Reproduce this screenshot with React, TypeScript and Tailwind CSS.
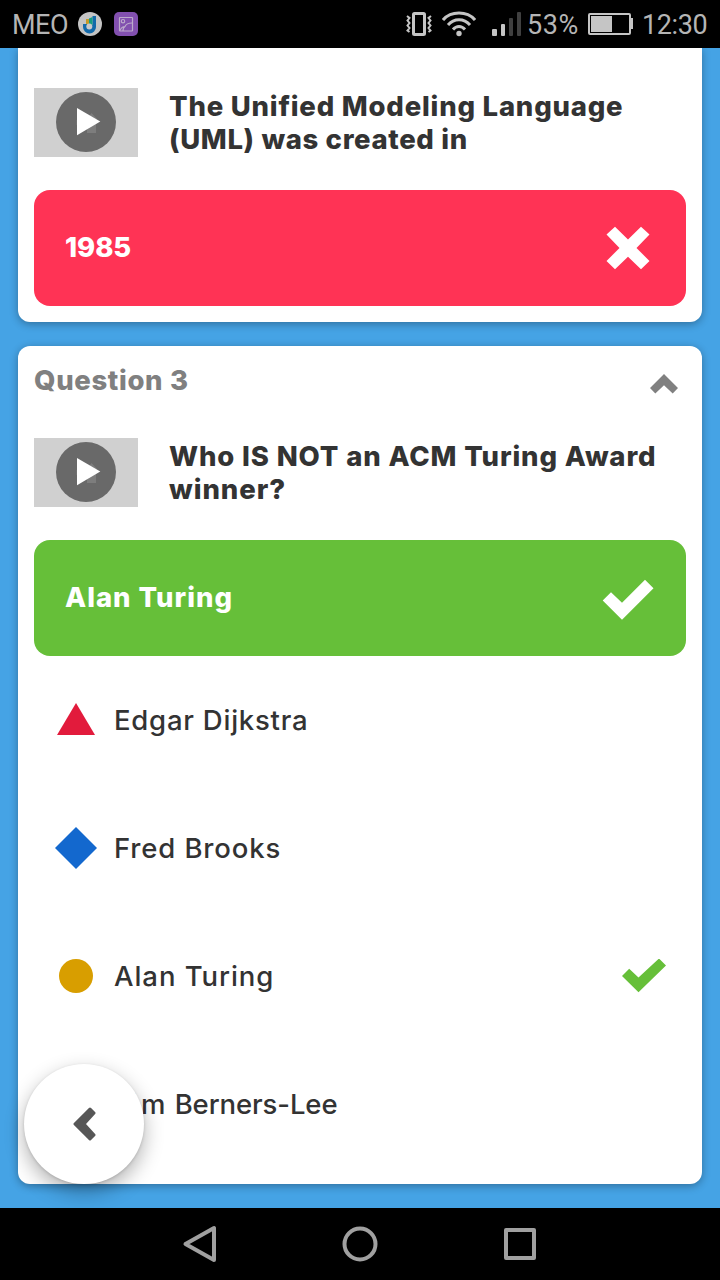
import type { ReactNode } from "react";

function StatusBar() {
  return (
    <header className="flex h-12 shrink-0 items-center bg-black pl-3 font-[Roboto,sans-serif] text-[27px] leading-none text-[#b5b5b5]">
      <span className="w-[66px] pt-[3px] tracking-[-0.5px]">MEO</span>
      <svg className="h-6 w-6" viewBox="0 0 24 24">
        <circle cx="12" cy="12" r="12" fill="#c4c4c4" />
        <path d="M14.500 4H18V15A6.400 6.400 0 0 1 5 15V12H9L14.500 13Z" fill="#126aab" />
        <path d="M8 7H11V12H8Z" fill="#c49a28" />
        <path d="M11 6.500L14.500 5V13H11Z" fill="#169c82" />
        <circle cx="11.300" cy="14.500" r="3" fill="#c9c9c9" />
      </svg>
      <svg className="ml-3 h-6 w-6" viewBox="0 0 24 24" fill="none">
        <rect width="24" height="24" rx="5" fill="#8250af" />
        <g stroke="#bcaacb" strokeWidth="1.200">
          <rect x="5.500" y="5.500" width="13" height="13.500" rx=".5" />
          <circle cx="9" cy="9.200" r="1.700" />
          <path d="M6 18.500C7 16 8.500 14.500 11 14.500C12 12 14.500 11 18 11M9 19C9 17 10 15 11 14.500" />
        </g>
      </svg>
      <svg className="ml-auto h-6 w-[26px]" viewBox="0 0 26 24" fill="none" stroke="#c5c5c5">
        <rect x="7.500" y="1.500" width="11" height="21" rx="1" strokeWidth="3" />
        <path d="M1 4L3.500 6L1.500 8.500L3.500 11L1.500 13.500L3.500 16L1.500 18.500L3.500 20M25 4L22.500 6L24.500 8.500L22.500 11L24.500 13.500L22.500 16L24.500 18.500L22.500 20" strokeWidth="2" />
      </svg>
      <svg className="ml-[10px] h-[26px] w-[34px]" viewBox="0 0 34 26" fill="none" stroke="#c5c5c5" strokeWidth="3">
        <path d="M1 9C9-.2 25-.2 33 9M6 14C12 7 22 7 28 14M11 18.500C14.500 14.500 19.500 14.500 23 18.500" />
        <circle cx="17" cy="22.500" r="2.700" fill="#c5c5c5" stroke="none" />
      </svg>
      <svg className="ml-4 h-6 w-[29px]" viewBox="0 0 29 24" fill="#c5c5c5">
        <rect y="17" width="5" height="7" rx="1" />
        <rect x="9" y="12" width="4" height="12" rx="1" />
        <rect x="17" y="6" width="4" height="18" rx="1" fill="#404040" />
        <rect x="25" width="4" height="24" rx="1" fill="#404040" />
      </svg>
      <span className="ml-[6px] w-[61px] pt-[3px] tracking-[0.6px]">53%</span>
      <svg className="h-[22px] w-[45px]" viewBox="0 0 45 22" fill="#c5c5c5">
        <rect x="1" y="1" width="41" height="20" rx="1" fill="none" stroke="#c5c5c5" strokeWidth="2" />
        <rect x="3" y="3" width="21" height="16" />
        <path d="M43 5H45V16H43Z" />
      </svg>
      <span className="ml-[9px] w-[78px] pt-[3px] tracking-[-0.4px]">12:30</span>
    </header>
  );
}

function VideoThumbnail() {
  return (
    <svg className="h-[69px] w-[104px] shrink-0 bg-[#d0d0d0]" viewBox="0 0 104 69">
      <circle cx="52" cy="34" r="30" fill="#696969" />
      <path d="M42.500 32H46V37H42.500ZM53 36H62V45H53ZM57.500 25L63 31H53Z" fill="#7d7d7d" />
      <path d="M43 20L66.300 33.500L43 47.200Z" fill="#fff" />
    </svg>
  );
}

function Prompt({ children }: { children: ReactNode }) {
  return (
    <div className="flex h-[69px] gap-8">
      <VideoThumbnail />
      <h2 className="-ml-px pt-[2px] text-[27.5px] leading-[33px] font-extrabold whitespace-nowrap text-[#333]">{children}</h2>
    </div>
  );
}

function Answer({ label, icon, correct }: { label: ReactNode; icon: string; correct?: boolean }) {
  return (
    <div className={`mt-[33px] flex h-[116px] items-center justify-between rounded-2xl pr-8 pl-[31px] text-[27.5px] font-extrabold text-white ${correct ? "bg-[#66bf39]" : "bg-[#ff3355]"}`}>
      <span>{label}</span>
      <svg className="h-[52px] w-[52px]" viewBox="0 0 52 52">
        <path d={icon} fill="#fff" />
      </svg>
    </div>
  );
}

function Choice({ label, shape, checked }: { label: ReactNode; shape: ReactNode; checked?: boolean }) {
  return (
    <li className="flex h-32 items-center">
      <svg className="ml-5 h-11 w-11" viewBox="0 0 44 44">{shape}</svg>
      <span className="ml-4 pt-[2px] text-[27.5px] font-medium whitespace-nowrap text-[#333]">{label}</span>
      {checked && (
        <svg className="mr-5 ml-auto h-[34px] w-11" viewBox="0 0 44 34">
          <path d="M0 17L7.200 9.800L16.500 18.500L37 -.5L44 6.500L16.500 33.300Z" fill="#66bf39" />
        </svg>
      )}
    </li>
  );
}

export default function App() {
  return (
    <div className="relative flex h-[1280px] w-[720px] flex-col overflow-hidden bg-[#45a3e5] font-[Inter,sans-serif]">
      <StatusBar />
      <main className="min-h-0 flex-1 overflow-hidden px-[18px]">
        <section className="h-[274px] rounded-b-xl bg-white px-4 pt-10 shadow-[0_2px_8px_rgba(0,0,0,0.32)]">
          <Prompt>
            <span className="block tracking-[0.79px]">The Unified Modeling Language</span>
            <span className="block tracking-[0.65px]">(UML) was created in</span>
          </Prompt>
          <Answer label={<span className="tracking-[-0.1px]">1985</span>} icon="M4.500 12.500L13 4.700L26 17.500L39 4.700L47.500 12.500L34.500 26L47.500 39L39 47.300L26 34.700L13 47.300L4.500 39L17.500 26Z" />
        </section>
        <section className="mt-6 h-[838px] rounded-xl bg-white px-4 shadow-[0_2px_8px_rgba(0,0,0,0.32)]">
          <div className="flex h-[92px] justify-between pt-[14px] pr-2 text-[#808080]">
            <h1 className="text-[27.5px] leading-10 font-extrabold tracking-[0.65px]">Question 3</h1>
            <svg className="mt-[14px] h-5 w-7" viewBox="0 0 28 20">
              <path d="M14 0L28 14L22.700 19.500L14 11.200L5.300 19.500L0 14Z" fill="currentColor" />
            </svg>
          </div>
          <Prompt>
            <span className="block tracking-[0.86px]">Who IS NOT an ACM Turing Award</span>
            <span className="block tracking-[0.95px]">winner?</span>
          </Prompt>
          <Answer correct label={<span className="tracking-[0.98px]">Alan Turing</span>} icon="M.7 28.500L9 20.200L20 30.700L43 7.700L51.500 16.200L20 47.700Z" />
          <ul>
            <Choice label={<span className="tracking-[0.77px]">Edgar Dijkstra</span>} shape={<path d="M22 5L41 37H3Z" fill="#e21b3c" />} />
            <Choice label={<span className="tracking-[0.87px]">Fred Brooks</span>} shape={<path d="M22 1L43 22L22 43L1 22Z" fill="#1368ce" />} />
            <Choice checked label={<span className="tracking-[0.95px]">Alan Turing</span>} shape={<circle cx="22" cy="22" r="17" fill="#d89e00" />} />
            <Choice
              label={
                <span className="tracking-[-0.1px]">
                  <span className="tracking-[-2px]">T</span>
                  <span className="tracking-[4px]">i</span>
                  <span className="tracking-[1px]">m </span>
                  Berners-Lee
                </span>
              }
              shape={<rect x="6" y="6" width="32" height="32" fill="#26890c" />}
            />
          </ul>
        </section>
      </main>
      <button aria-label="Back" className="absolute top-[1064px] left-6 flex h-[120px] w-[120px] items-center justify-center rounded-full bg-white shadow-[0_8px_20px_rgba(0,0,0,0.3),0_1px_3px_rgba(0,0,0,0.15)]">
        <svg className="h-9 w-6" viewBox="0 0 24 36">
          <path d="M18 3L22 7L12 18L22 29L18 33L3 18Z" fill="#575757" stroke="#575757" strokeWidth="3" strokeLinejoin="round" />
        </svg>
      </button>
      <nav className="flex h-[72px] shrink-0 items-center justify-between bg-black px-[180px]">
        <svg className="h-10 w-10" viewBox="0 0 40 40" fill="none" stroke="#a0a0a0" strokeWidth="4" strokeLinejoin="round">
          <path d="M34 4V36L5.500 20Z" />
        </svg>
        <svg className="h-10 w-10" viewBox="0 0 40 40" fill="none" stroke="#a0a0a0" strokeWidth="4">
          <circle cx="20" cy="20" r="15.500" />
        </svg>
        <svg className="h-10 w-10" viewBox="0 0 40 40" fill="none" stroke="#a0a0a0" strokeWidth="4" strokeLinejoin="round">
          <rect x="6" y="6" width="28" height="28" />
        </svg>
      </nav>
    </div>
  );
}
